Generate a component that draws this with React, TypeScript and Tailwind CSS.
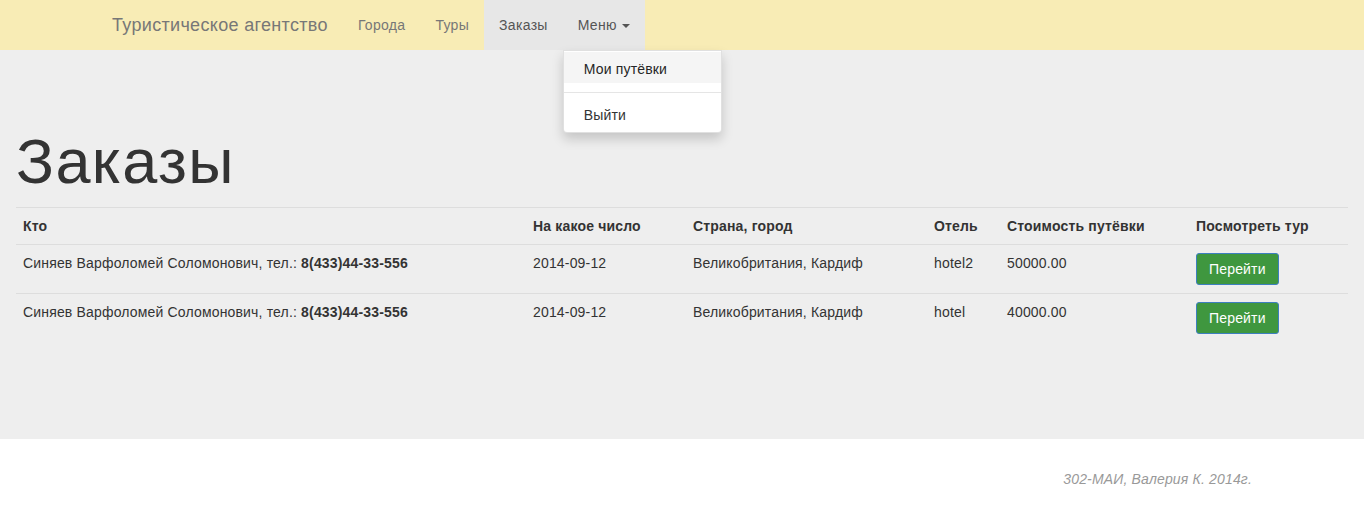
const orders = [
  { who: 'Синяев Варфоломей Соломонович', phone: '8(433)44-33-556', date: '2014-09-12', place: 'Великобритания, Кардиф', hotel: 'hotel2', price: '50000.00' },
  { who: 'Синяев Варфоломей Соломонович', phone: '8(433)44-33-556', date: '2014-09-12', place: 'Великобритания, Кардиф', hotel: 'hotel', price: '40000.00' },
];

function Navbar() {
  return (
    <nav className="relative h-[50px] bg-[#f8ecb5]">
      <div className="mx-auto flex h-full w-[1170px] px-[15px]">
        <a className="flex h-full items-center pr-[15px] text-[18px] tracking-[0.018em] text-[#777]">Туристическое агентство</a>
        <ul className="flex h-full tracking-[0.022em]">
          <li className="flex h-full items-center px-[15px] text-[#777]">Города</li>
          <li className="flex h-full items-center px-[15px] text-[#777]">Туры</li>
          <li className="flex h-full items-center bg-[#e7e7e7] px-[15px] text-[#555]">Заказы</li>
          <li className="relative flex h-full items-center bg-[#e7e7e7] px-[15px] text-[#555]">
            Меню
            <span className="ml-[5px] mt-[2px] inline-block h-0 w-0 border-x-[4px] border-t-[4px] border-x-transparent border-t-[#555]" />
            <div className="absolute left-0 top-[50px] z-10 w-[159px] rounded-b-[4px] border border-[#ccc]/60 bg-white py-[1px] tracking-[0.012em] shadow-[0_6px_12px_rgba(0,0,0,0.175)]">
              <div className="bg-[#f5f5f5] px-[20px] pb-[4px] pt-[7px] leading-[20px] text-[#262626]">Мои путёвки</div>
              <div className="my-[9px] h-px bg-[#e5e5e5]" />
              <div className="px-[20px] pb-[6px] pt-[3px] leading-[20px] text-[#333]">Выйти</div>
            </div>
          </li>
        </ul>
      </div>
    </nav>
  );
}

function App() {
  return (
    <div className="min-h-[527px] bg-white font-['Liberation_Sans',Arial,sans-serif] text-[14px] leading-[20px] tracking-[0.012em] text-[#333]">
      <Navbar />
      <div className="h-[389px] bg-[#eeeeee] px-[16px] pt-[77px]">
        <h1 className="text-[63px] leading-[69px] font-normal tracking-[0.022em] text-[#333]">Заказы</h1>
        <table className="mt-[11px] w-full border-collapse">
          <thead>
            <tr className="border-t border-[#ddd] text-left">
              <th className="w-[509px] border-b border-[#ddd] px-[7px] py-[8px] font-bold">Кто</th>
              <th className="w-[160px] border-b border-[#ddd] px-[8px] py-[8px] font-bold">На какое число</th>
              <th className="w-[241px] border-b border-[#ddd] px-[8px] py-[8px] font-bold">Страна, город</th>
              <th className="w-[73px] border-b border-[#ddd] px-[8px] py-[8px] font-bold">Отель</th>
              <th className="w-[189px] border-b border-[#ddd] px-[8px] py-[8px] font-bold">Стоимость путёвки</th>
              <th className="border-b border-[#ddd] px-[8px] py-[8px] font-bold">Посмотреть тур</th>
            </tr>
          </thead>
          <tbody>
            {orders.map((o, i) => (
              <tr key={i} className="border-t border-[#ddd] align-top first:border-t-0">
                <td className="px-[7px] py-[8px]">
                  {o.who}, тел.: <b>{o.phone}</b>
                </td>
                <td className="px-[8px] py-[8px]">{o.date}</td>
                <td className="px-[8px] py-[8px]">{o.place}</td>
                <td className="px-[8px] py-[8px]">{o.hotel}</td>
                <td className="px-[8px] py-[8px]">{o.price}</td>
                <td className="px-[8px] py-[8px]">
                  <button className="h-[32px] rounded-[3px] border border-[#3d7fbf] bg-[#3f973f] px-[12px] text-white">
                    Перейти
                  </button>
                </td>
              </tr>
            ))}
          </tbody>
        </table>
      </div>
      <footer className="mx-auto w-[1170px] px-[15px] pt-[30px] text-right italic text-[#999]">
        302-МАИ, Валерия К. 2014г.
      </footer>
    </div>
  );
}

export default App;
